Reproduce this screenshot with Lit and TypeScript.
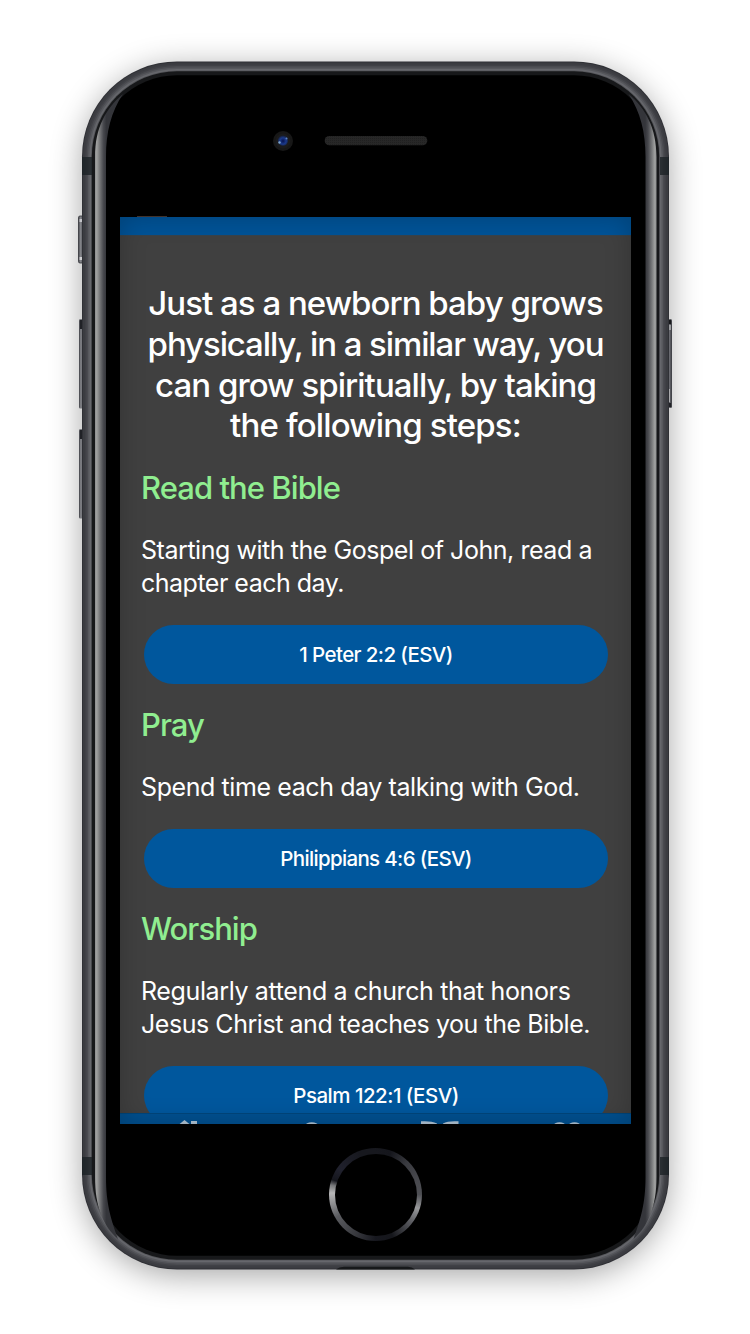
import { LitElement, html, css, svg } from "lit";
import { customElement } from "lit/decorators.js";

// Concentric rims of the metal frame: inset from the outer edge and colour.
const rims: [number, string][] = [
  [0, "#303136"], [1, "#3b3c41"], [3, "#404146"], [4.5, "#4a4b50"], [6, "#57585d"],
  [7.5, "#66676c"], [9, "#55565a"], [9.8, "#17181a"], [13.8, "#000"],
];

// A line of copy with its tracking in pixels.
type Line = [string, number];

const heading: Line[] = [
  ["Just as a newborn baby grows", -0.98],
  ["physically, in a similar way, you", -1.11],
  ["can grow spiritually, by taking", -0.95],
  ["the following steps:", -0.85],
];

const sections: { title: string; lines: Line[]; verse: string; track: number }[] = [
  { title: "Read the Bible", lines: [["Starting with the Gospel of John, read a", -0.45], ["chapter each day.", -0.5]], verse: "1 Peter 2:2 (ESV)", track: -0.6 },
  { title: "Pray", lines: [["Spend time each day talking with God.", -0.41]], verse: "Philippians 4:6 (ESV)", track: -0.66 },
  { title: "Worship", lines: [["Regularly attend a church that honors", -0.37], ["Jesus Christ and teaches you the Bible.", -0.45]], verse: "Psalm 122:1 (ESV)", track: -0.5 },
];

@customElement("phone-frame")
class PhoneFrame extends LitElement {
  static styles = css`
    :host { display: block; width: 750px; height: 1334px; }
    svg { display: block; }
  `;
  render() {
    const glint = "M123 94 C106 108 95 128 95 157 V1177 C95 1206 103 1226 118 1239 C111 1219 106 1204 106 1177 V157 C106 132 111 112 123 94Z";
    return html`<svg width="750" height="1334" viewBox="0 0 750 1334">
      <defs>
        <linearGradient id="glint" gradientUnits="userSpaceOnUse" x1="95" x2="106.3" y1="0" y2="0">
          <stop offset="0" stop-color="#8c8d8e"/><stop offset=".15" stop-color="#a0a1a0"/><stop offset=".45" stop-color="#727375"/>
          <stop offset=".75" stop-color="#47484d"/><stop offset="1" stop-color="#34353a"/>
        </linearGradient>
        <linearGradient id="key" x1="0" x2="1" y1="0" y2="0">
          <stop offset="0" stop-color="#3a3b41"/><stop offset=".3" stop-color="#85868b"/><stop offset=".7" stop-color="#5d5e64"/><stop offset="1" stop-color="#383a3f"/>
        </linearGradient>
        <radialGradient id="lens" cx=".5" cy=".55" r=".55">
          <stop offset="0" stop-color="#06124e"/><stop offset=".55" stop-color="#1b3a8d"/><stop offset="1" stop-color="#161a26"/>
        </radialGradient>
        <pattern id="mesh" width="2" height="2" patternUnits="userSpaceOnUse"><rect width="2" height="2" fill="#272727"/><rect width="1" height="1" fill="#202020"/></pattern>
        <filter id="blur" x="-20%" y="-20%" width="140%" height="140%"><feGaussianBlur stdDeviation="17"/></filter>
      </defs>
      <rect x="84" y="69" width="583" height="1205" rx="95" fill="#000" opacity=".38" filter="url(#blur)"/>
      <rect x="78.5" y="216" width="6" height="47" rx="1.5" fill="url(#key)" stroke="#34353a" stroke-width=".8"/>
      <rect x="79.5" y="219" width="3" height="3" fill="#c5c5ca"/><rect x="79.5" y="257" width="3" height="3" fill="#d0d0d3"/>
      <rect x="79" y="319" width="6" height="89.5" rx="1.5" fill="url(#key)"/><rect x="80" y="320" width="4" height="9" fill="#202126"/>
      <rect x="79" y="429" width="6" height="89.5" rx="1.5" fill="url(#key)"/><rect x="80" y="430" width="4" height="9" fill="#202126"/>
      <rect x="666" y="319" width="6" height="89" rx="1.5" fill="url(#key)"/>
      <rect x="668" y="320" width="3" height="4" fill="#17181b"/><rect x="668" y="325" width="3" height="5" fill="#9c9da0"/>
      <rect x="667" y="389" width="3" height="13" fill="#aaaaad"/><rect x="668" y="403" width="3" height="4" fill="#202126"/>
      ${rims.map(([i, c]) => svg`<rect x=${82 + i} y=${61.5 + i} width=${587 - 2 * i} height=${1208 - 2 * i} rx=${95 - i} fill=${c}/>`)}
      <rect x="82" y="157" width="10" height="18" fill="#1b2226" opacity=".8"/><rect x="660" y="157" width="9" height="18" fill="#1b2226" opacity=".8"/>
      <rect x="82" y="1157" width="10" height="18" fill="#1b2226" opacity=".8"/><rect x="660" y="1157" width="9" height="18" fill="#1b2226" opacity=".8"/>
      <path d=${glint} fill="url(#glint)"/>
      <path d=${glint} fill="url(#glint)" transform="translate(751.5 0) scale(-1 1)"/>
      <circle cx="283" cy="141" r="10" fill="#171717"/><circle cx="283" cy="141" r="7.5" fill="#1b1b1c"/>
      <circle cx="283" cy="140.5" r="5.2" fill="url(#lens)"/><circle cx="279.5" cy="142.5" r="1.2" fill="#7fa6c9"/><circle cx="286.5" cy="138.5" r="1" fill="#5d83c4"/>
      <rect x="324.7" y="136" width="102.6" height="9.3" rx="4.6" fill="url(#mesh)"/>
      <path d="M336 1269.5 Q339 1266.8 344 1266.8 H408 Q412 1266.8 415 1269.5Z" fill="#17191b"/>
    </svg>`;
  }
}

@customElement("app-root")
class AppRoot extends LitElement {
  static styles = css`
    :host { display: block; width: 750px; height: 1334px; overflow: hidden; background: #fff; font-family: Inter, sans-serif; color: #fff; }
    .stage { display: grid; }
    .stage > * { grid-area: 1 / 1; }
    .face { padding-top: 216px; display: flex; flex-direction: column; align-items: center; z-index: 1; margin-left: 1px; box-sizing: border-box; height: 1334px; }
    .mark { width: 30px; height: 1px; margin-right: 447px; background: #40322c; }
    .screen { width: 511px; height: 907px; display: flex; flex-direction: column; overflow: hidden; background: #404040; position: relative; }
    .shade { position: absolute; inset: 0; box-shadow: inset 0 0 26px rgba(0,0,0,.22); }
    .top { height: 19px; flex: none; background: #005397; border-bottom: 1px solid #37434c; box-sizing: border-box; }
    .content { height: 878px; overflow: hidden; padding: 47px 22px 0 21px; box-sizing: border-box; }
    h1 { margin: 0 0 1px 1px; font-size: 33px; line-height: 40.8px; font-weight: 500; text-align: center; white-space: nowrap; display: flex; flex-direction: column; align-items: center; }
    h2 { margin: 0; font-size: 31px; line-height: 38px; font-weight: 500; letter-spacing: -.95px; color: #90ee90; padding-top: 22px; }
    p { margin: 0; padding: 26.5px 0 25.5px; font-size: 25px; line-height: 33px; white-space: nowrap; }
    .line { display: block; }
    .verse { margin: 0 1px 0 3px; height: 59px; border-radius: 30px; background: #00579d; display: flex; align-items: center; justify-content: center; font-size: 20.5px; font-weight: 500; }
    .tabs { height: 10px; flex: none; background: #005090; box-shadow: 0 -1px 0 #00467c; position: relative; }
    .ring { width: 93px; height: 93px; margin-top: 24px; border-radius: 50%; padding: 5.5px; box-sizing: border-box;
      background: conic-gradient(#17181e 0deg, #15161c 20deg, #3a3b40 45deg, #47484d 70deg, #4e4f54 90deg, #98999b 108deg, #5a5b60 128deg, #15161b 158deg, #17181f 180deg, #36373c 205deg, #5b5c60 240deg, #b7b7b8 272deg, #77787a 282deg, #15161d 289deg, #20212d 305deg, #17181e 340deg, #17181e 360deg); }
    .hole { height: 100%; border-radius: 50%; background: #000; }
    svg { display: block; }
  `;
  render() {
    const l = ([text, track]: Line) => html`<span class="line" style="letter-spacing:${track}px">${text}</span>`;
    return html`<div class="stage">
      <phone-frame></phone-frame>
      <div class="face">
        <div class="mark"></div>
        <div class="screen">
          <div class="top"></div>
          <div class="content">
            <h1>${heading.map(l)}</h1>
            ${sections.map((s) => html`<h2>${s.title}</h2><p>${s.lines.map(l)}</p><div class="verse" style="letter-spacing:${s.track}px">${s.verse}</div>`)}
          </div>
          <div class="tabs">
            <svg width="511" height="10" viewBox="120 1114 511 10" fill="#b3c6d6">
              <path d="M179 1124.5 L184.5 1120 L190 1124.5Z M191 1121 H197 V1126 H191Z"/>
              <ellipse cx="311.7" cy="1125.5" rx="6.5" ry="3.3"/>
              <path d="M421 1126 V1121.3 Q431 1120.6 437 1123.5 V1126Z M443 1126 V1123.5 Q448 1120.6 458.5 1121.3 V1126Z"/>
              <ellipse cx="559.5" cy="1125.5" rx="6" ry="3.3"/><ellipse cx="574.5" cy="1125.5" rx="6" ry="3.3"/>
            </svg>
          </div>
          <div class="shade"></div>
        </div>
        <div class="ring"><div class="hole"></div></div>
      </div>
    </div>`;
  }
}
